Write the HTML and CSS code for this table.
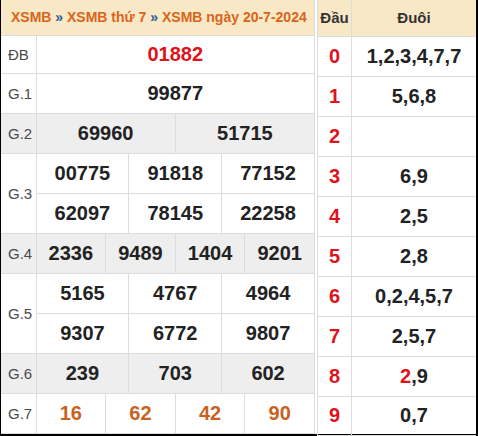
FILE: index.html
```html
<!DOCTYPE html>
<html>
<head>
<meta charset="utf-8">
<link rel="stylesheet" href="styles.css">
</head>
<body>
<div class="frame">
  <table class="kq">
    <colgroup>
      <col class="c-label">
      <col><col><col><col><col><col><col><col><col><col><col><col>
    </colgroup>
    <tr class="head">
      <th colspan="13"><span class="t">XSMB</span> <span class="sep">»</span> <span class="t">XSMB thứ 7</span> <span class="sep">»</span> <span class="t">XSMB ngày 20-7-2024</span></th>
    </tr>
    <tr class="r-db">
      <td class="lbl">ĐB</td>
      <td colspan="12" class="num red">01882</td>
    </tr>
    <tr>
      <td class="lbl">G.1</td>
      <td colspan="12" class="num">99877</td>
    </tr>
    <tr class="gray">
      <td class="lbl">G.2</td>
      <td colspan="6" class="num">69960</td>
      <td colspan="6" class="num">51715</td>
    </tr>
    <tr>
      <td class="lbl" rowspan="2">G.3</td>
      <td colspan="4" class="num">00775</td>
      <td colspan="4" class="num">91818</td>
      <td colspan="4" class="num">77152</td>
    </tr>
    <tr>
      <td colspan="4" class="num">62097</td>
      <td colspan="4" class="num">78145</td>
      <td colspan="4" class="num">22258</td>
    </tr>
    <tr class="gray">
      <td class="lbl">G.4</td>
      <td colspan="3" class="num">2336</td>
      <td colspan="3" class="num">9489</td>
      <td colspan="3" class="num">1404</td>
      <td colspan="3" class="num">9201</td>
    </tr>
    <tr>
      <td class="lbl" rowspan="2">G.5</td>
      <td colspan="4" class="num">5165</td>
      <td colspan="4" class="num">4767</td>
      <td colspan="4" class="num">4964</td>
    </tr>
    <tr>
      <td colspan="4" class="num">9307</td>
      <td colspan="4" class="num">6772</td>
      <td colspan="4" class="num">9807</td>
    </tr>
    <tr class="gray">
      <td class="lbl">G.6</td>
      <td colspan="4" class="num">239</td>
      <td colspan="4" class="num">703</td>
      <td colspan="4" class="num">602</td>
    </tr>
    <tr>
      <td class="lbl">G.7</td>
      <td colspan="3" class="num orange">16</td>
      <td colspan="3" class="num orange">62</td>
      <td colspan="3" class="num orange">42</td>
      <td colspan="3" class="num orange">90</td>
    </tr>
  </table>

  <table class="loto">
    <colgroup>
      <col class="c-dau">
      <col>
    </colgroup>
    <tr class="head">
      <th>Đầu</th>
      <th>Đuôi</th>
    </tr>
    <tr><td class="dau">0</td><td class="num">1,2,3,4,7,7</td></tr>
    <tr><td class="dau">1</td><td class="num">5,6,8</td></tr>
    <tr><td class="dau">2</td><td class="num"></td></tr>
    <tr><td class="dau">3</td><td class="num">6,9</td></tr>
    <tr><td class="dau">4</td><td class="num">2,5</td></tr>
    <tr><td class="dau">5</td><td class="num">2,8</td></tr>
    <tr><td class="dau">6</td><td class="num">0,2,4,5,7</td></tr>
    <tr><td class="dau">7</td><td class="num">2,5,7</td></tr>
    <tr><td class="dau">8</td><td class="num"><span class="red">2</span>,9</td></tr>
    <tr class="last"><td class="dau">9</td><td class="num">0,7</td></tr>
  </table>
</div>
</body>
</html>
```

FILE: styles.css
```css
html, body {
  margin: 0;
  padding: 0;
  background: #fff;
}

body {
  font-family: "Liberation Sans", Arial, sans-serif;
  color: #222;
}

.frame {
  width: 478px;
  height: 436px;
  box-sizing: border-box;
  border-left: 1px solid #000;
  border-right: 2px solid #000;
  border-bottom: 2px solid #000;
  display: flex;
  align-items: flex-start;
  gap: 2px;
  background: #fff;
}

table {
  border-collapse: collapse;
  table-layout: fixed;
}

td, th {
  border: 1px solid #dcdcdc;
  padding: 0;
  text-align: center;
  vertical-align: middle;
}

.kq {
  width: 314px;
  border-left: none;
}

.kq td:first-child,
.kq th:first-child {
  border-left: none;
}

.c-label {
  width: 35px;
}

.kq tr {
  height: 40px;
}

.kq tr.head {
  height: 35px;
}

.kq tr.r-db {
  height: 38px;
}

tr.head th {
  background: #f9e8c6;
  border-top: none;
  font-size: 14px;
  font-weight: bold;
}

.kq tr.head th {
  text-align: left;
  padding-left: 10px;
  color: #d9641a;
}

.sep {
  color: #2e5a96;
}

.lbl {
  text-align: left;
  padding-left: 7px;
  font-size: 15px;
  color: #4a4a4a;
}

.num {
  font-size: 20px;
  font-weight: bold;
  color: #222;
}

.red {
  color: #e0121a;
}

.num.red {
  color: #e0121a;
}

.orange,
.num.orange {
  color: #c9621f;
}

tr.gray td {
  background: #eeeeee;
}

.loto {
  width: 159px;
}

.loto td:last-child,
.loto th:last-child {
  border-right: none;
}

.c-dau {
  width: 34px;
}

.loto tr {
  height: 40px;
}

.loto tr.head {
  height: 36px;
}

.loto tr.last {
  height: 39px;
}

.loto tr.head th {
  color: #333;
  font-size: 15px;
}

.dau {
  font-size: 20px;
  font-weight: bold;
  color: #e0121a;
}
```
